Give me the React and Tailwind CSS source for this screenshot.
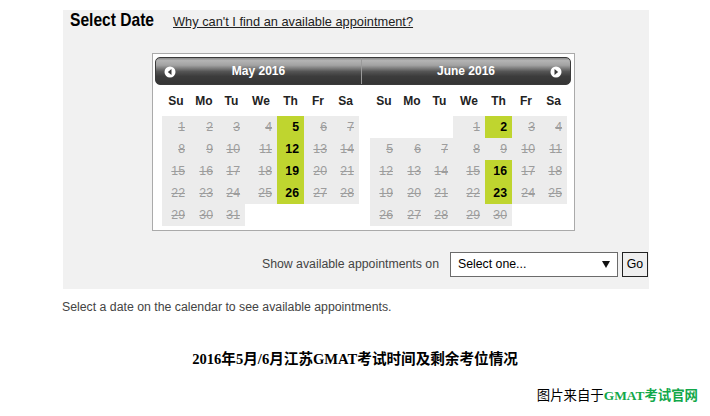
import React from "react";

const COLS = "grid grid-cols-[28px_28px_27px_32px_27px_28px_27px] w-[197px]";
const NAMES = ["Su", "Mo", "Tu", "We", "Th", "Fr", "Sa"];

function buildMonth(startDow, days, available) {
  const cells = [];
  for (let i = 0; i < startDow; i++) cells.push(null);
  for (let d = 1; d <= days; d++) cells.push(d);
  while (cells.length % 7) cells.push(null);
  return cells.map((d) => ({ d, ok: d !== null && available.includes(d) }));
}

function Month({ cells }) {
  return (
    <div className="pl-[7px]">
      <div className={COLS + " h-[31px] items-center"}>
        {NAMES.map((n) => (
          <div key={n} className="text-center text-[12px] font-bold text-[#222]">
            {n}
          </div>
        ))}
      </div>
      <div className={COLS}>
        {cells.map((c, i) =>
          c.d === null ? (
            <div key={i} className="h-[22px]" />
          ) : c.ok ? (
            <div
              key={i}
              className="h-[22px] bg-[#bfd52f] text-right pr-[5px] text-[12.3px] leading-[22px] font-bold text-black"
            >
              {c.d}
            </div>
          ) : (
            <div
              key={i}
              className="h-[22px] bg-[#ececec] text-right pr-[5px] text-[12.3px] leading-[22px] text-[#9d9d9d] line-through"
            >
              {c.d}
            </div>
          )
        )}
      </div>
    </div>
  );
}

function Arrow({ dir }) {
  return (
    <svg width="12" height="12" viewBox="0 0 12 12">
      <circle cx="6" cy="6" r="5.5" fill="#fff" />
      {dir === "left" ? (
        <polygon points="7.5,3 7.5,9 3.8,6" fill="#3a3a3a" />
      ) : (
        <polygon points="4.5,3 4.5,9 8.2,6" fill="#3a3a3a" />
      )}
    </svg>
  );
}

export default function App() {
  const may = buildMonth(0, 31, [5, 12, 19, 26]);
  const june = buildMonth(3, 30, [2, 16, 23]);
  return (
    <div className="w-[710px] h-[416px] bg-white font-['Liberation_Sans',Arial,sans-serif] overflow-hidden">
      <div className="pt-[10px]">
        <div className="ml-[63px] w-[586px] h-[279px] bg-[#f1f1f1] flex flex-col">
          <div className="flex items-baseline pl-[7px] leading-none">
            <span className="inline-block w-[84px] whitespace-nowrap">
              <span className="inline-block origin-left scale-x-[0.82] font-bold text-[19px] leading-none text-black">
                Select Date
              </span>
            </span>
            <a className="ml-[19px] text-[12.8px] underline text-[#222] leading-none">
              Why can't I find an available appointment?
            </a>
          </div>
          <div className="ml-[89px] mt-[24px] w-[423px] border border-[#aaaaaa] bg-white pt-[3px] pl-[2px] pb-[4px]">
            <div className="relative w-[416px] h-[28px] rounded-[5px] border border-[#3a3a3a] bg-[linear-gradient(to_bottom,#8a8a8a_0%,#b4b4b4_10%,#a2a2a2_28%,#555_52%,#3c3c3c_70%,#353535_100%)] flex">
              <div className="w-[206px] border-r border-[#9a9a9a] flex items-center justify-center text-white font-bold text-[12px]">
                May 2016
              </div>
              <div className="flex-1 flex items-center justify-center text-white font-bold text-[12px]">
                June 2016
              </div>
              <div className="absolute left-[8px] top-[7.5px]">
                <Arrow dir="left" />
              </div>
              <div className="absolute right-[8px] top-[7.5px]">
                <Arrow dir="right" />
              </div>
            </div>
            <div className="flex">
              <div className="w-[208px]">
                <Month cells={may} />
              </div>
              <div className="w-[208px]">
                <Month cells={june} />
              </div>
            </div>
          </div>
          <div className="mt-[21px] flex items-center justify-end pr-[1px]">
            <span className="text-[12.3px] text-[#444]">Show available appointments on</span>
            <div className="ml-[11px] w-[168px] h-[25px] border border-[#6b6b6b] bg-white flex items-center justify-between pl-[7px] pr-[7px]">
              <span className="text-[12.3px] text-black">Select one...</span>
              <svg width="8" height="7" viewBox="0 0 8 7">
                <polygon points="0,0 8,0 4,7" fill="#111" />
              </svg>
            </div>
            <div className="ml-[4px] w-[26px] h-[25px] border border-[#222] bg-[#efefef] flex items-center justify-center text-[12.3px] text-black">
              Go
            </div>
          </div>
        </div>
        <div className="ml-[62px] mt-[11px] text-[12.3px] leading-[15px] text-[#444]">
          Select a date on the calendar to see available appointments.
        </div>
        <div className="mt-[34px] text-center text-[14.6px] leading-[20px] font-bold text-black font-['Liberation_Serif','Noto_Sans_CJK_SC',serif]">
          2016年5月/6月江苏GMAT考试时间及剩余考位情况
        </div>
        <div className="mt-[17px] pr-[12px] text-right text-[13.4px] leading-[20px] font-['Liberation_Serif','Noto_Sans_CJK_SC',serif]">
          <span className="text-black">图片来自于</span>
          <span className="text-[#12a84a] font-bold">GMAT考试官网</span>
        </div>
      </div>
    </div>
  );
}
